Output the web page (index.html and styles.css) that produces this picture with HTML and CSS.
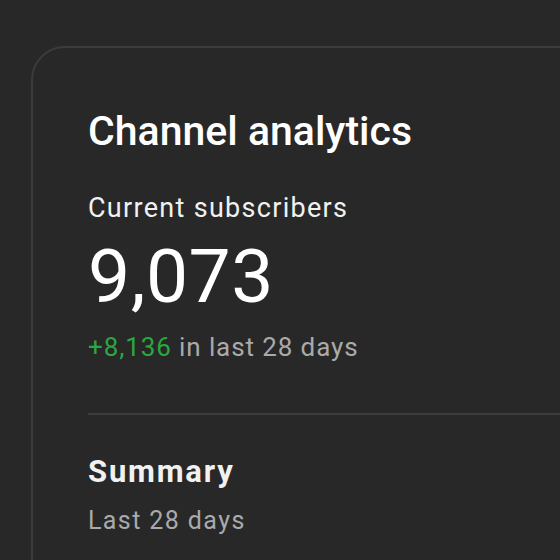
FILE: index.html
```html
<!DOCTYPE html>
<html lang="en">

<head>
    <meta charset="UTF-8">
    <title>Channel analytics</title>
    <link rel="stylesheet" href="styles.css">
</head>

<body>
    <div class="card">
        <h2 class="card-title">Channel analytics</h2>
        <div class="subs">
            <div class="subs-label">Current subscribers</div>
            <div class="subs-count">9,073</div>
            <div class="subs-change"><span class="up">+8,136</span> in last 28 days</div>
        </div>
        <hr class="divider">
        <div class="summary">
            <h3 class="summary-title">Summary</h3>
            <div class="summary-range">Last 28 days</div>
        </div>
    </div>
</body>

</html>
```

FILE: styles.css
```css
body {
    font-family: Roboto, 'Noto Sans', Arial, sans-serif;
    background: #282828;
    color: #f1f1f1;
    margin: 0;
    padding: 0;
    overflow: hidden;
}

.card {
    width: 700px;
    height: 700px;
    margin: 46px 0 0 31px;
    border: 2px solid #3c3c3c;
    border-radius: 34px;
    padding: 59px 0 0 55px;
    box-sizing: border-box;
}

.card-title {
    margin: 0;
    font-size: 41px;
    line-height: 48px;
    font-weight: 500;
    color: #fff;
}

.subs {
    margin-top: 37px;
}

.subs-label {
    font-size: 27px;
    line-height: 32px;
    letter-spacing: 1.3px;
}

.subs-count {
    margin-top: 12px;
    font-size: 75px;
    line-height: 80px;
    letter-spacing: 0.5px;
    color: #fff;
}

.subs-change {
    margin-top: 15px;
    font-size: 26px;
    line-height: 32px;
    letter-spacing: 0.9px;
    color: #aaa;
}

.up {
    color: #2ba640;
}

.divider {
    margin: 50px 0 0 0;
    border: none;
    border-top: 2px solid #3c3c3c;
}

.summary {
    margin-top: 41px;
}

.summary-title {
    margin: 0;
    font-size: 31px;
    line-height: 32px;
    font-weight: 700;
    letter-spacing: 1.8px;
}

.summary-range {
    margin-top: 17px;
    font-size: 25px;
    line-height: 32px;
    letter-spacing: 1.4px;
    color: #aaa;
}
```
